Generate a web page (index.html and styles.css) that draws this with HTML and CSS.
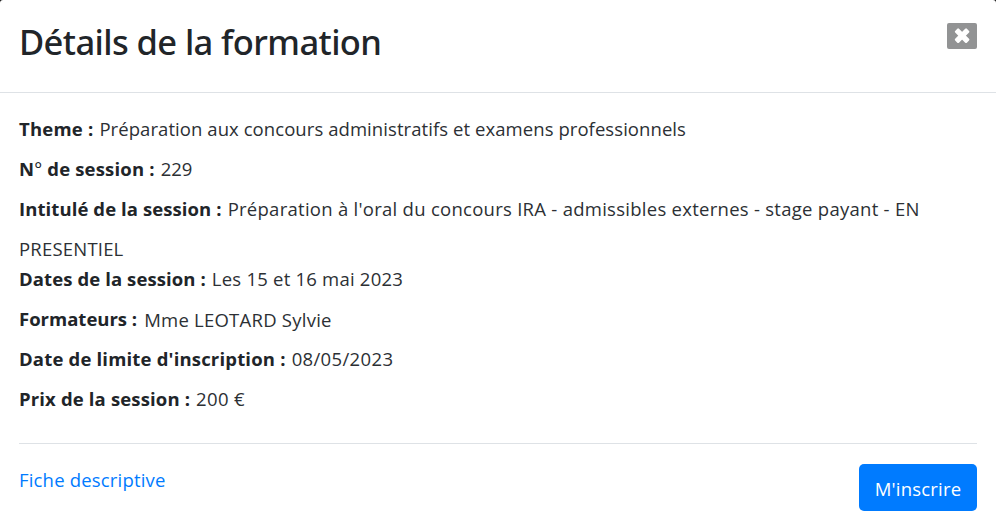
FILE: index.html
```html
<!DOCTYPE html>
<html lang="fr">
<head>
<meta charset="utf-8">
<title>Détails de la formation</title>
<link rel="stylesheet" href="styles.css">
</head>
<body>
<main class="modal">
<header class="header">
<h1>Détails de la formation</h1>
<button class="close" aria-label="Fermer"><svg viewBox="0 0 30 26"><rect class="plate" width="30" height="26" rx="2"/><g transform="translate(15.1 12.7) rotate(45)"><rect class="bar" x="-8.3" y="-2.7" width="16.6" height="5.4" rx="1.2"/><rect class="bar" x="-2.7" y="-8.3" width="5.4" height="16.6" rx="1.2"/></g></svg></button>
</header>
<section class="body">
<p><b class="label theme">Theme :</b><span class="theme-value">Préparation aux concours administratifs et examens professionnels</span></p>
<p><b class="label number">N<span class="degree">°</span> de session :</b><span>229</span></p>
<p><b class="label title">Intitulé de la session :</b><span class="title-value">Préparation à l'oral du concours IRA - admissibles externes - stage payant - EN</span></p>
<p class="continued"><span class="title-end">PRESENTIEL</span></p>
<p><b class="label dates">Dates de la session :</b><span class="dates-value">Les 15 et 16 mai 2023</span></p>
<p><b class="label">Formateurs :</b><span class="trainers-value">Mme LEOTARD Sylvie</span></p>
<p><b class="label deadline">Date de limite d'inscription :</b><span class="deadline-value">08/05/2023</span></p>
<p><b class="label price">Prix de la session :</b><span class="price-value">200 €</span></p>
</section>
<footer class="footer"><a href="#">Fiche descriptive</a><button class="submit">M'inscrire</button></footer>
</main>
</body>
</html>
```
FILE: styles.css
```css
*{box-sizing:border-box}
body{margin:0;background:#111;color:#212529;font-family:"Open Sans","Noto Sans",sans-serif;font-size:18.5px}
.modal{height:528px;overflow:hidden;background:#fff;border-radius:3px 3px 0 0}
.header{height:93px;border-bottom:1px solid #dee2e6;padding:17px 19px 0;display:flex;justify-content:space-between}
h1{font:500 34.5px/50px "Noto Sans",sans-serif;letter-spacing:-.6px;margin:0;white-space:nowrap}
.close{width:30px;height:26px;margin-top:6px;border:0;padding:0;background:none}
.close svg{display:block;width:30px;height:26px}
.plate{fill:#929394}
.bar{fill:#fff}
.body{margin:0 19px;padding-top:16px;height:351px;border-bottom:1px solid #dee2e6}
p{margin:0;height:40px;line-height:40px;display:flex;white-space:nowrap}
p.continued{height:30px}
.label{flex:none;margin-right:6px}
p > span{color:#2c3034}
.degree{font-weight:400}
.theme{letter-spacing:.2px}
.number{letter-spacing:.17px}
.title{letter-spacing:.09px}
.dates{letter-spacing:.1px}
.deadline{letter-spacing:.18px}
.price{letter-spacing:.15px}
.theme-value{letter-spacing:.07px}
.title-value{letter-spacing:.27px}
.title-end{letter-spacing:.2px}
.dates-value{letter-spacing:.22px}
.trainers-value{letter-spacing:.24px;padding-top:1px;margin-left:1px}
.deadline-value{letter-spacing:.35px}
.price-value{letter-spacing:.35px}
.footer{display:flex;justify-content:space-between;padding:20px 19px}
a{color:#007bff;text-decoration:none;line-height:32px;letter-spacing:.18px}
.submit{width:118px;height:47px;border:0;border-radius:5px;background:#007bff;color:#fff;font:inherit;letter-spacing:.2px;padding:2px 0 0}
```
